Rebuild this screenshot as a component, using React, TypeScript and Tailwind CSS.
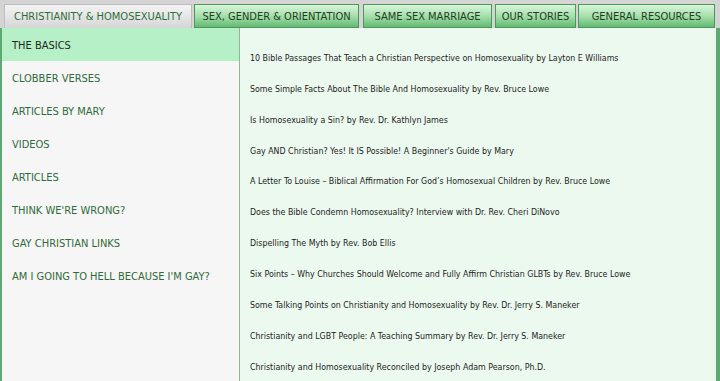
import React from 'react'

const tabs = [
  { label: 'CHRISTIANITY & HOMOSEXUALITY', w: 'w-[188px]', ml: 'ml-[4px]', active: true },
  { label: 'SEX, GENDER & ORIENTATION', w: 'w-[165px]', ml: 'ml-[2px]' },
  { label: 'SAME SEX MARRIAGE', w: 'w-[129px]', ml: 'ml-[4px]' },
  { label: 'OUR STORIES', w: 'w-[81px]', ml: 'ml-[3px]' },
  { label: 'GENERAL RESOURCES', w: 'w-[137px]', ml: 'ml-[2px]' },
]

const sideItems = [
  'THE BASICS',
  'CLOBBER VERSES',
  'ARTICLES BY MARY',
  'VIDEOS',
  'ARTICLES',
  "THINK WE'RE WRONG?",
  'GAY CHRISTIAN LINKS',
  "AM I GOING TO HELL BECAUSE I'M GAY?",
]

const links = [
  '10 Bible Passages That Teach a Christian Perspective on Homosexuality by Layton E Williams',
  'Some Simple Facts About The Bible And Homosexuality by Rev. Bruce Lowe',
  'Is Homosexuality a Sin? by Rev. Dr. Kathlyn James',
  "Gay AND Christian? Yes! It IS Possible! A Beginner's Guide by Mary",
  'A Letter To Louise – Biblical Affirmation For God’s Homosexual Children by Rev. Bruce Lowe',
  'Does the Bible Condemn Homosexuality? Interview with Dr. Rev. Cheri DiNovo',
  'Dispelling The Myth by Rev. Bob Ellis',
  'Six Points – Why Churches Should Welcome and Fully Affirm Christian GLBTs by Rev. Bruce Lowe',
  'Some Talking Points on Christianity and Homosexuality by Rev. Dr. Jerry S. Maneker',
  'Christianity and LGBT People: A Teaching Summary by Rev. Dr. Jerry S. Maneker',
  'Christianity and Homosexuality Reconciled by Joseph Adam Pearson, Ph.D.',
]

export default function App() {
  return (
    <div className="w-[720px] h-[381px] overflow-hidden bg-[#d4d4d4] font-['DejaVu_Sans_Condensed','DejaVu_Sans',Verdana,sans-serif]">
      <nav className="flex pt-[4px] h-[28px]">
        {tabs.map((t) => (
          <div
            key={t.label}
            className={
              t.active
                ? `${t.w} ${t.ml} h-[24px] flex items-center justify-center pt-[2px] whitespace-nowrap text-[11px] text-[#2e6e3c] border border-b-0 border-[#bdbdbd] bg-gradient-to-b from-[#f4f4f4] to-[#d6d6d6]`
                : `${t.w} ${t.ml} h-[24px] flex items-center justify-center pt-[2px] whitespace-nowrap text-[11px] text-[#1f3f22] border border-[#4a9a5c] bg-gradient-to-b from-[#d9f4da] via-[#a6dfac] to-[#62b973]`
            }
          >
            {t.label}
          </div>
        ))}
      </nav>
      <div className="flex h-[353px] border-l-[2px] border-r-[4px] border-[#5fa873]">
        <aside className="w-[238px] bg-[#f6f6f6] border-r border-[#8fb69a]">
          {sideItems.map((s, i) => (
            <div
              key={s}
              className={`h-[33px] flex items-center pl-[10px] pt-[3px] text-[11px] ${
                i === 0 ? 'bg-[#b6f0c6] text-[#1e2a1e]' : 'text-[#2f6a3a]'
              }`}
            >
              {s}
            </div>
          ))}
        </aside>
        <main className="flex-1 bg-[#ecf9ef] pl-[10px] pt-[15px]">
          {links.map((l) => (
            <div key={l} className="h-[30.9px] flex items-center text-[8.8px] text-[#1c1c1c]">
              {l}
            </div>
          ))}
        </main>
      </div>
    </div>
  )
}
